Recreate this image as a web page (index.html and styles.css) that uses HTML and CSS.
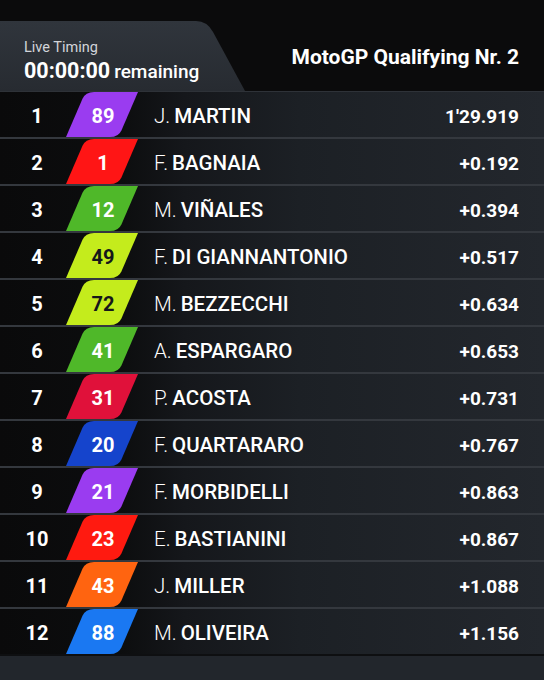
FILE: index.html
```html
<!DOCTYPE html>
<html lang="en">
<head>
    <meta charset="UTF-8">
    <meta name="viewport" content="width=device-width, initial-scale=1.0">
    <title>Live Timing - MotoGP</title>
    <link rel="stylesheet" href="styles.css">
</head>
<body>
    <div class="board">
        <header class="head">
            <div class="tab">
                <div class="tab-label">Live Timing</div>
                <div class="tab-clock"><span class="clock">00:00:00</span><span class="remaining">remaining</span></div>
            </div>
            <h1 class="session">MotoGP Qualifying Nr. 2</h1>
        </header>

        <div class="results" id="results">
            <!-- rows are built from the data below -->
        </div>

        <div class="foot"></div>
    </div>

    <script>
        const riders = [
            { num: '89', init: 'J.', name: 'MARTIN', time: "1'29.919", color: '#9a3cf0' },
            { num: '1', init: 'F.', name: 'BAGNAIA', time: '+0.192', color: '#ff1515' },
            { num: '12', init: 'M.', name: 'VIÑALES', time: '+0.394', color: '#4fb829' },
            { num: '49', init: 'F.', name: 'DI GIANNANTONIO', time: '+0.517', color: '#c4ec1c', dark: true },
            { num: '72', init: 'M.', name: 'BEZZECCHI', time: '+0.634', color: '#c4ec1c', dark: true },
            { num: '41', init: 'A.', name: 'ESPARGARO', time: '+0.653', color: '#4fb829' },
            { num: '31', init: 'P.', name: 'ACOSTA', time: '+0.731', color: '#e0113a' },
            { num: '20', init: 'F.', name: 'QUARTARARO', time: '+0.767', color: '#1544cc' },
            { num: '21', init: 'F.', name: 'MORBIDELLI', time: '+0.863', color: '#9a3cf0' },
            { num: '23', init: 'E.', name: 'BASTIANINI', time: '+0.867', color: '#ff1a10' },
            { num: '43', init: 'J.', name: 'MILLER', time: '+1.088', color: '#ff6410' },
            { num: '88', init: 'M.', name: 'OLIVEIRA', time: '+1.156', color: '#1a78f2' }
        ];

        const results = document.getElementById('results');
        riders.forEach((r, i) => {
            const row = document.createElement('div');
            row.className = 'row';
            row.innerHTML = `
                <div class="pos">${i + 1}</div>
                <div class="badge${r.dark ? ' badge-dark' : ''}">
                    <svg class="badge-shape" viewBox="0 0 72 46" preserveAspectRatio="none">
                        <path d="M0 46 L16.5 7 Q19.5 0 28 0 L72 0 L55.5 39 Q52.5 46 44 46 Z" fill="${r.color}"/>
                    </svg>
                    <span class="badge-num">${r.num}</span>
                </div>
                <div class="rider"><span class="init">${r.init}</span>${r.name}</div>
                <div class="gap">${r.time}</div>
            `;
            results.appendChild(row);
        });
    </script>
</body>
</html>
```

FILE: styles.css
```css
body {
    margin: 0;
    padding: 0;
    background: #0b0b0c;
    color: white;
    font-family: Roboto, 'Liberation Sans', sans-serif;
}

.board {
    width: 544px;
    min-height: 680px;
}

.head {
    display: flex;
    align-items: flex-end;
    justify-content: space-between;
    padding-top: 21px;
    height: 70px;
    border-bottom: 1px solid #2e3238;
}

.tab {
    position: relative;
    width: 245px;
    height: 70px;
    padding: 19px 0 0 24px;
    box-sizing: border-box;
}

.tab::before {
    content: '';
    position: absolute;
    inset: 0;
    background: linear-gradient(180deg, #30353c 0%, #272b31 100%);
    clip-path: path('M0 0 H196 Q207 0 213 11 L245 70 H0 Z');
}

.tab-label,
.tab-clock {
    position: relative;
}

.tab-label {
    font-size: 14.5px;
    color: #d2d5da;
    line-height: 16px;
}

.tab-clock {
    margin-top: 3px;
    line-height: 23px;
    white-space: nowrap;
}

.clock {
    font-size: 21.5px;
    font-weight: 700;
    margin-right: 4px;
}

.remaining {
    font-size: 19px;
    font-weight: 500;
}

.session {
    margin: 0 25px 21px 0;
    font-size: 21px;
    font-weight: 700;
    line-height: 26px;
}

.row {
    display: grid;
    grid-template-columns: 66px 72px 1fr auto;
    align-items: center;
    height: 45px;
    border-bottom: 2px solid #34383e;
    background: linear-gradient(90deg, #0a0a0b 0%, #0c0d0e 22%, #15171b 34%, #1c2025 55%, #23272d 100%);
}

.row:last-child {
    border-bottom-color: #0e0f11;
}

.pos,
.badge-num,
.rider,
.gap {
    padding-top: 3px;
}

.pos {
    padding-left: 8px;
    text-align: center;
    font-size: 20px;
    font-weight: 700;
}

.badge {
    position: relative;
    height: 45px;
    display: flex;
    align-items: center;
    justify-content: center;
}

.badge-shape {
    position: absolute;
    inset: 0;
    width: 100%;
    height: 100%;
}

.badge-num {
    position: relative;
    font-size: 20px;
    font-weight: 700;
    padding-left: 2px;
}

.badge-dark .badge-num {
    color: #15171a;
}

.rider {
    padding-left: 16px;
    font-size: 20.5px;
    font-weight: 500;
    white-space: nowrap;
}

.init {
    font-weight: 300;
    margin-right: 4px;
}

.gap {
    padding-right: 25px;
    font-size: 19px;
    font-weight: 700;
    text-align: right;
}

.foot {
    height: 24px;
    background: #22262c;
}
```
